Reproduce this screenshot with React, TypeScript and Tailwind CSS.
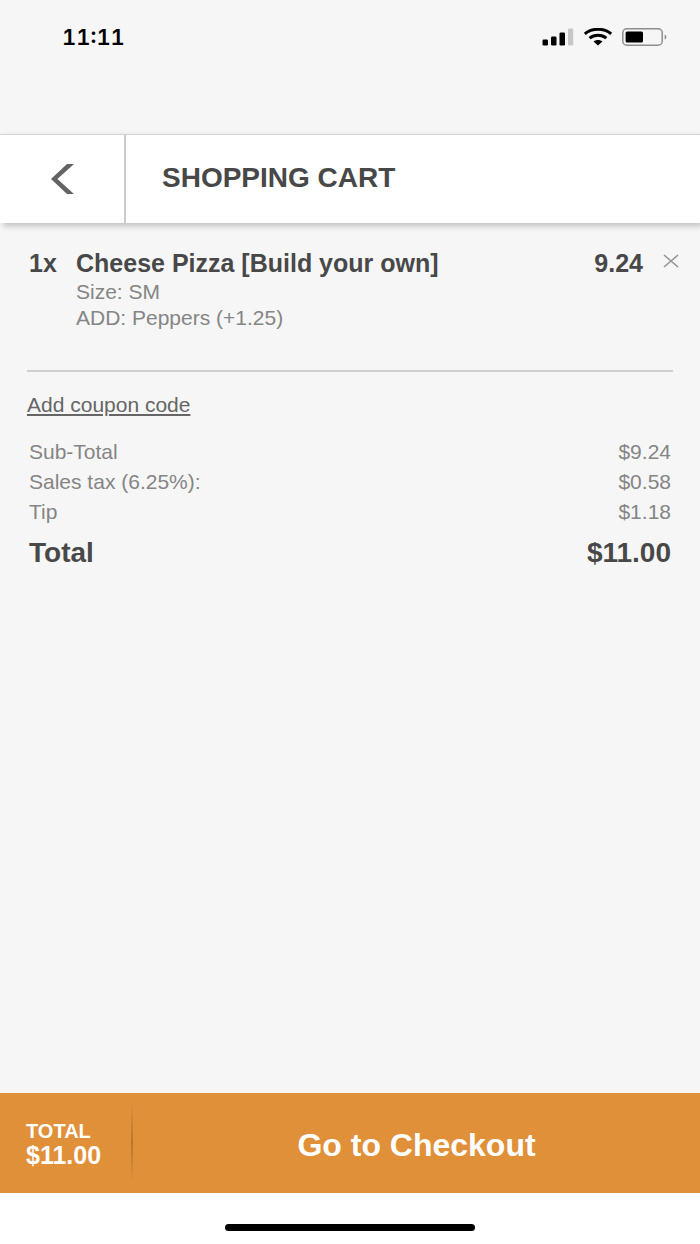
type CartItem = {
	quantity: number;
	name: string;
	options: string[];
	price: string;
};

const items: CartItem[] = [
	{
		quantity: 1,
		name: "Cheese Pizza [Build your own]",
		options: ["Size: SM", "ADD: Peppers (+1.25)"],
		price: "9.24",
	},
];

const charges = [
	{ label: "Sub-Total", amount: "$9.24" },
	{ label: "Sales tax (6.25%):", amount: "$0.58" },
	{ label: "Tip", amount: "$1.18" },
];

const total = "$11.00";

function StatusBar() {
	return (
		<div className="flex h-[134px] items-start justify-between pt-[22px] pr-8 pl-[62px]">
			<span className="font-[Inter,sans-serif] text-[22px] leading-[30px] font-semibold text-black tabular-nums">
				11:11
			</span>
			<div className="flex h-[30px] items-center gap-[9px]">
				<svg width="32" height="18" viewBox="0 0 32 18" aria-hidden="true">
					<rect x="0.5" y="11.5" width="5.5" height="6" rx="1.2" />
					<rect x="9" y="8.5" width="5.5" height="9" rx="1.2" />
					<rect x="17.5" y="4.5" width="5.5" height="13" rx="1.2" />
					<rect x="26" y="0.5" width="5.2" height="17" rx="1.2" fill="#c6c6c6" />
				</svg>
				<svg width="30" height="18" viewBox="0 0 30 18" aria-hidden="true">
					<g fill="none" stroke="#000" strokeWidth="3">
						<path d="M1.8 5.8C9.2 -0.2 20.8 -0.2 28.2 5.8" />
						<path d="M6.6 10.2C11.4 6.3 18.6 6.3 23.4 10.2" />
					</g>
					<path d="M10.6 13.6C13.2 11.6 16.8 11.6 19.4 13.6L15 17.4Z" />
				</svg>
				<svg width="46" height="18" viewBox="0 0 46 18" aria-hidden="true">
					<rect
						x="0.8"
						y="0.8"
						width="39.4"
						height="16.4"
						rx="4"
						fill="none"
						stroke="#8e8e8e"
						strokeWidth="1.5"
					/>
					<rect x="3.6" y="3.4" width="17.4" height="11.2" rx="1.5" />
					<path d="M42.6 6.5C45 7.4 45 10.6 42.6 11.5Z" fill="#8e8e8e" />
				</svg>
			</div>
		</div>
	);
}

function Header() {
	return (
		<header className="flex h-[89px] border-t border-[#d4d4d4] bg-white shadow-[3px_3px_6px_rgba(0,0,0,0.22)]">
			<button
				type="button"
				aria-label="Back"
				className="flex w-[126px] items-center justify-center border-r-2 border-[#cbcbcb]"
			>
				<svg width="24" height="30" viewBox="0 0 24 30" aria-hidden="true">
					<path d="M17 0H24L7.4 15L24 30H17L1 15Z" fill="#636363" />
				</svg>
			</button>
			<h1 className="flex items-center pb-[2px] pl-9 text-[28px] font-bold text-[#484848]">
				SHOPPING CART
			</h1>
		</header>
	);
}

function CartRow(props: { item: CartItem }) {
	const { item } = props;
	return (
		<li className="flex items-start text-[#484848]">
			<span className="w-[47px] text-[25px] leading-8 font-bold">
				{item.quantity}x
			</span>
			<div className="flex-1">
				<h2 className="text-[25px] leading-8 font-bold">{item.name}</h2>
				{item.options.map((option) => (
					<p key={option} className="text-[21px] leading-[26px] text-[#858585]">
						{option}
					</p>
				))}
			</div>
			<span className="text-[25px] leading-8 font-bold">{item.price}</span>
			<button
				type="button"
				aria-label={`Remove ${item.name}`}
				className="ml-5 flex h-7 items-center"
			>
				<svg width="16" height="14" viewBox="0 0 16 14" aria-hidden="true">
					<path
						d="M1 1L15 13M15 1L1 13"
						fill="none"
						stroke="#929292"
						strokeWidth="1.6"
					/>
				</svg>
			</button>
		</li>
	);
}

function Totals() {
	return (
		<dl className="px-[2px] pt-[18px] text-[21px] leading-[30px] text-[#858585]">
			{charges.map((charge) => (
				<div key={charge.label} className="flex justify-between">
					<dt>{charge.label}</dt>
					<dd>{charge.amount}</dd>
				</div>
			))}
			<div className="flex justify-between pt-[11px] text-[28px] font-bold text-[#484848]">
				<dt>Total</dt>
				<dd>{total}</dd>
			</div>
		</dl>
	);
}

function CheckoutBar() {
	return (
		<div className="flex h-[100px] items-center bg-[#e1903a] font-bold text-white">
			<div className="w-[131px] pl-[26px] leading-6">
				<p className="text-xl leading-6">TOTAL</p>
				<p className="text-[25px] leading-6">{total}</p>
			</div>
			<div className="h-20 w-[2px] bg-linear-to-b from-transparent via-[#b8752e] to-transparent" />
			<button type="button" className="h-full flex-1 pt-1 text-[32px]">
				Go to Checkout
			</button>
		</div>
	);
}

export default function App() {
	return (
		<div className="flex min-h-screen flex-col bg-[#f6f6f6] font-['Liberation_Sans',Arial,sans-serif]">
			<StatusBar />
			<Header />
			<main className="flex-1">
				<ul className="pt-6 pr-[21px] pb-[39px] pl-[29px]">
					{items.map((item) => (
						<CartRow key={item.name} item={item} />
					))}
				</ul>
				<section className="mx-[27px] border-t-2 border-[#cfcfcf] pt-5">
					<a
						href="#coupon"
						className="text-[21px] leading-[26px] text-[#666] underline underline-offset-2"
					>
						Add coupon code
					</a>
					<Totals />
				</section>
			</main>
			<CheckoutBar />
			<div className="flex h-[51px] justify-center bg-white pt-[31px]">
				<div className="h-[7px] w-[250px] rounded-full bg-black" />
			</div>
		</div>
	);
}
